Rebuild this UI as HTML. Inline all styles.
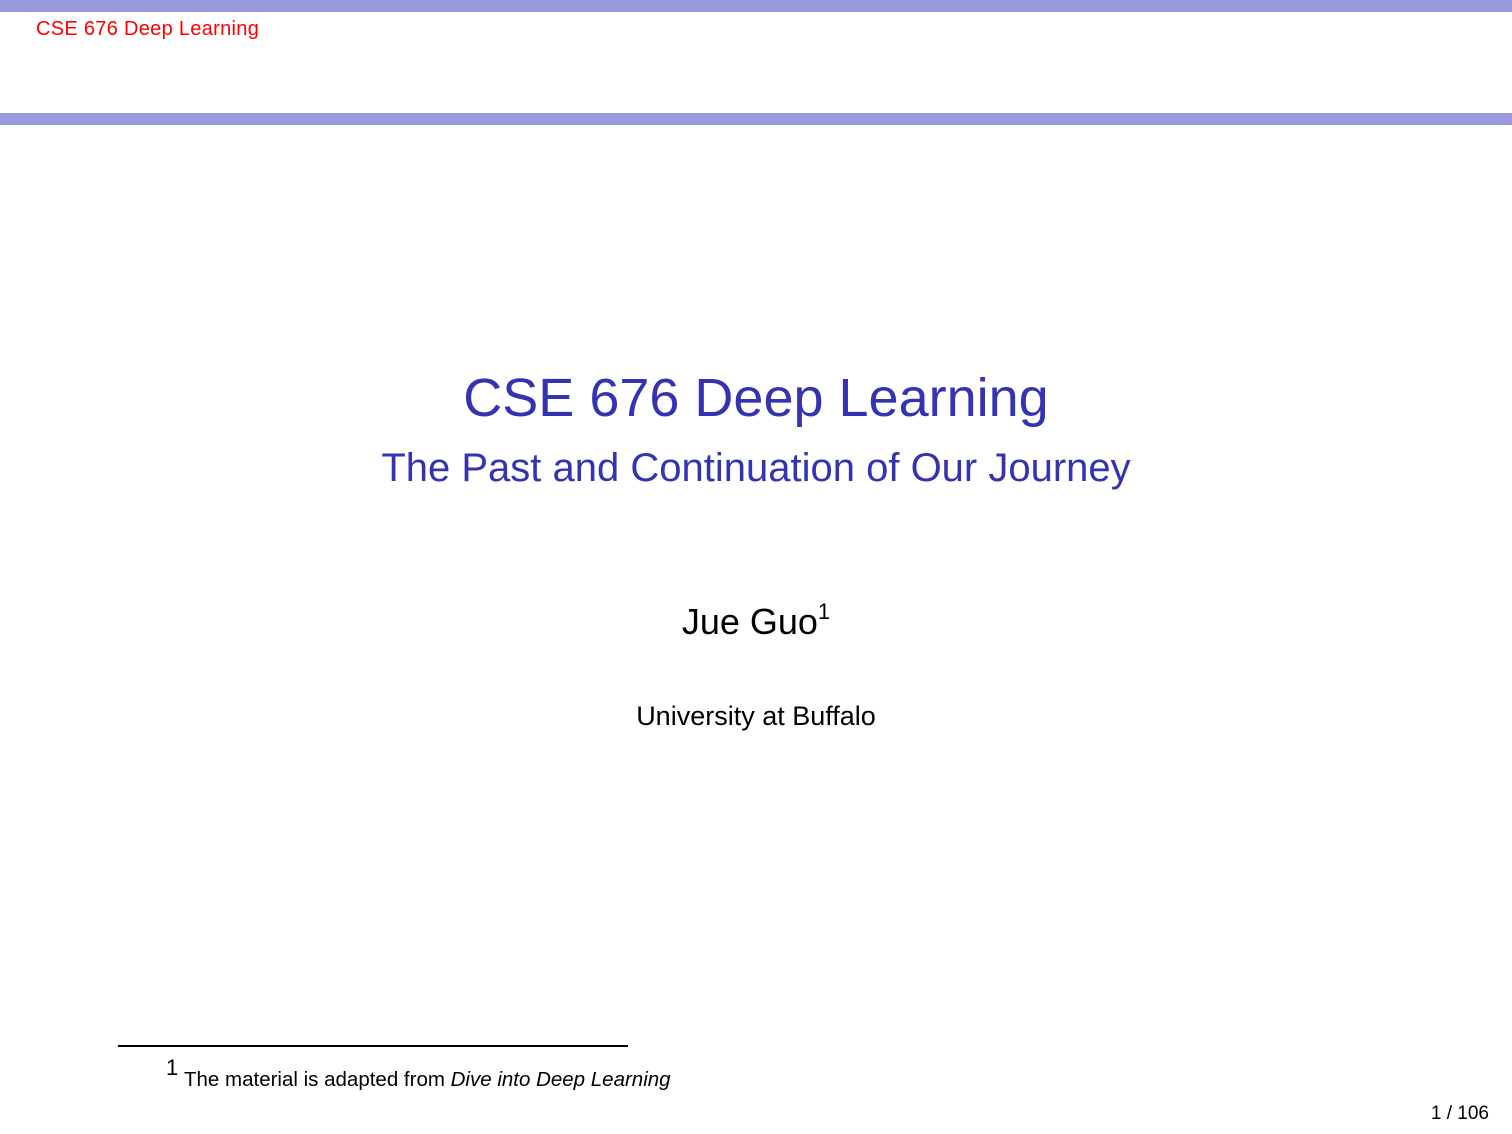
<!DOCTYPE html>
<html><head><style>
body{margin:0;width:1512px;height:1134px;background:#fff;position:relative;overflow:hidden;font-family:"Liberation Sans",sans-serif}
.bar{position:absolute;left:0;width:1512px;background:#9999d9}
.t{position:absolute;white-space:nowrap}
.c{left:0;width:1512px;text-align:center}
</style></head><body>
<div class="bar" style="top:0;height:12px"></div>
<div class="bar" style="top:113px;height:12px"></div>
<div class="t" style="left:36px;top:18px;font-size:20px;color:#f00;letter-spacing:0.3px">CSE 676 Deep Learning</div>
<div class="t c" style="top:367px;font-size:54px;color:#3333b3">CSE 676 Deep Learning</div>
<div class="t c" style="top:446px;font-size:40px;color:#3333b3">The Past and Continuation of Our Journey</div>
<div class="t c" style="top:601px;font-size:36px;color:#000">Jue Guo<sup style="font-size:22px;position:relative;top:-2px">1</sup></div>
<div class="t c" style="top:701px;font-size:27px;color:#000">University at Buffalo</div>
<div style="position:absolute;left:118px;top:1045px;width:510px;height:2px;background:#000"></div>
<div class="t" style="left:166px;top:1055px;font-size:22px">1</div>
<div class="t" style="left:184px;top:1068px;font-size:20.5px">The material is adapted from <i>Dive into Deep Learning</i></div>
<div class="t" style="right:23px;top:1103px;font-size:19px">1 / 106</div>
</body></html>
